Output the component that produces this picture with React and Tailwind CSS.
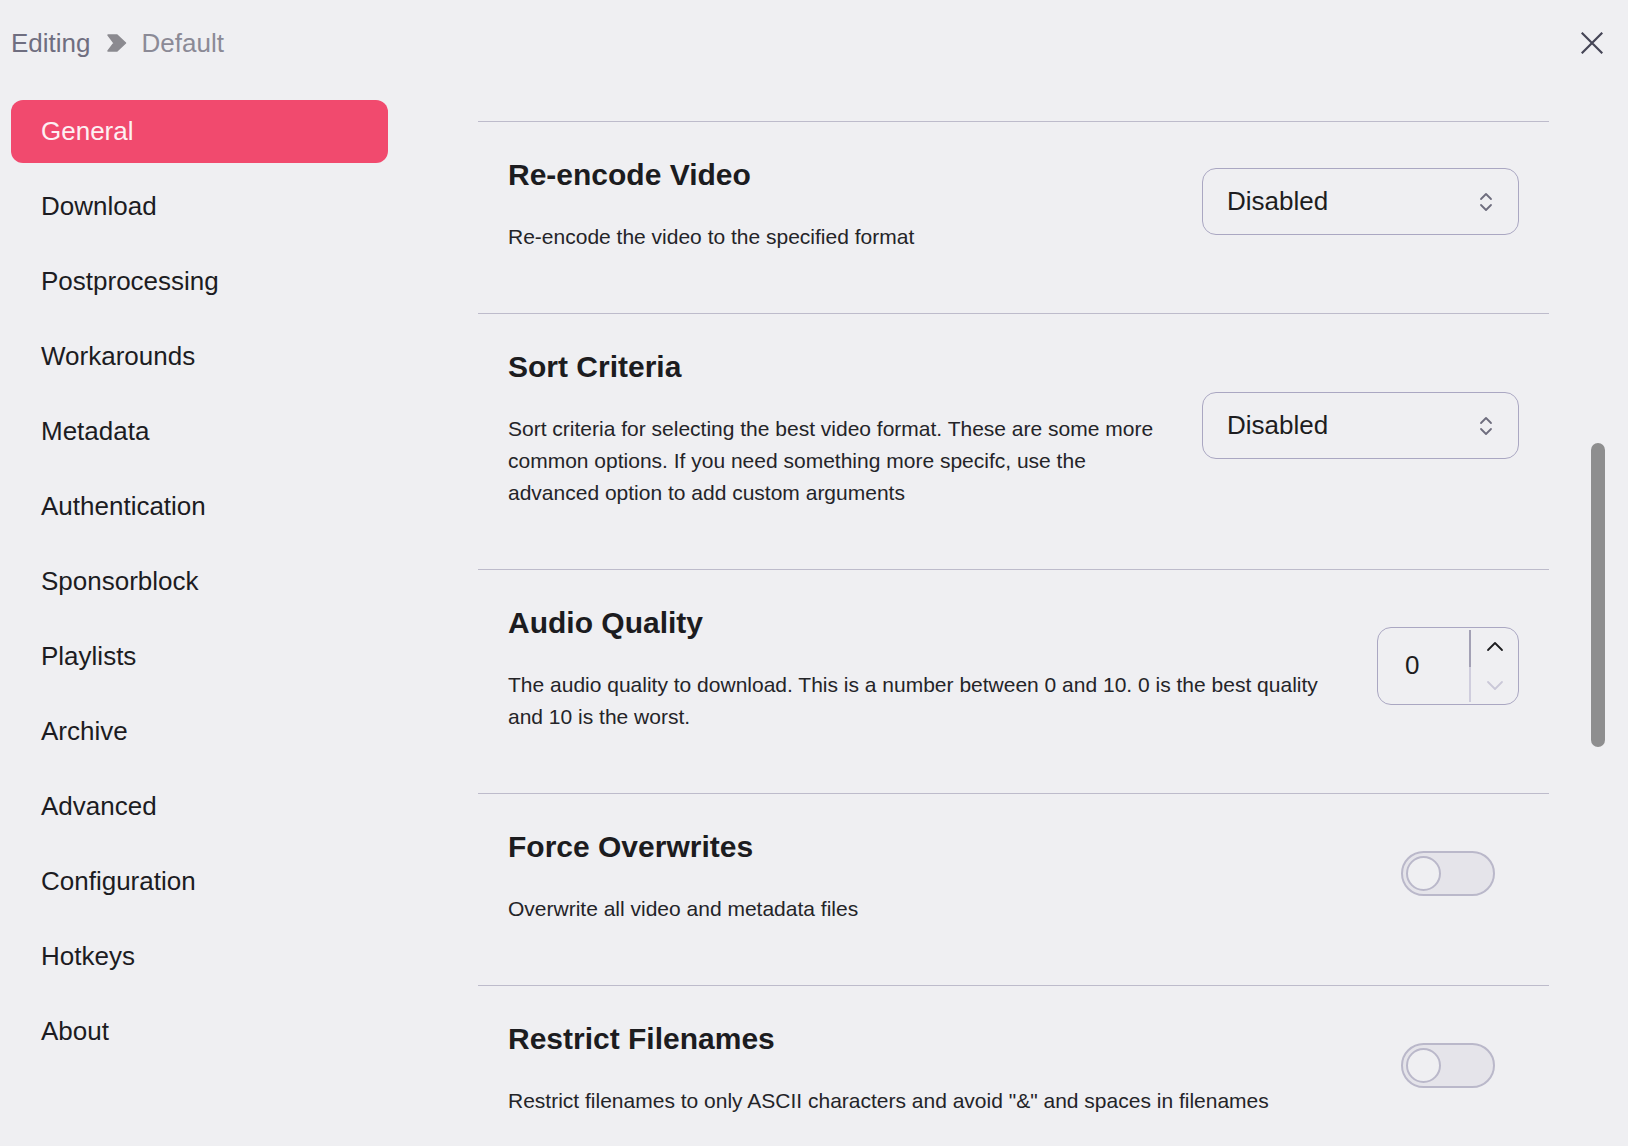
import React from "react";

const navItems = [
  "General",
  "Download",
  "Postprocessing",
  "Workarounds",
  "Metadata",
  "Authentication",
  "Sponsorblock",
  "Playlists",
  "Archive",
  "Advanced",
  "Configuration",
  "Hotkeys",
  "About",
];

function SelectBox() {
  return (
    <div className="w-[317px] h-[67px] shrink-0 mb-[7px] rounded-[14px] border border-[#aaa7c2] flex items-center justify-between pl-[24px] pr-[24px]">
      <span className="text-[26px] text-[#1d1d20]">Disabled</span>
      <svg width="16" height="24" viewBox="0 0 16 24" fill="none" stroke="#6e6d7e" strokeWidth="1.8" strokeLinecap="round" strokeLinejoin="round">
        <path d="M3 9 L8 4 L13 9" />
        <path d="M3 15 L8 20 L13 15" />
      </svg>
    </div>
  );
}

function NumberBox() {
  return (
    <div className="w-[142px] h-[78px] shrink-0 mb-[7px] rounded-[14px] border border-[#aaa7c2] flex">
      <div className="flex-1 flex items-center pl-[27px] text-[26px] text-[#1d1d20]">0</div>
      <div className="w-[49px] flex flex-col py-[2px]">
        <div className="flex-1 border-l-2 border-[#a3a1b5] flex items-center justify-center pb-[5px]">
          <svg width="20" height="12" viewBox="0 0 20 12" fill="none" stroke="#1d1d20" strokeWidth="1.8" strokeLinecap="round" strokeLinejoin="round">
            <path d="M3 10 L10 3 L17 10" />
          </svg>
        </div>
        <div className="flex-1 border-l-2 border-[#cfcddd] flex items-center justify-center pt-[2px]">
          <svg width="20" height="12" viewBox="0 0 20 12" fill="none" stroke="#cac8d8" strokeWidth="1.8" strokeLinecap="round" strokeLinejoin="round">
            <path d="M3 3 L10 10 L17 3" />
          </svg>
        </div>
      </div>
    </div>
  );
}

function Toggle() {
  return (
    <div className="w-[94px] h-[45px] shrink-0 mr-[24px] mb-[7px] rounded-full border-2 border-[#bab8ca] bg-[#e5e4ea] flex items-center pl-[3px]">
      <div className="w-[35px] h-[35px] rounded-full border-2 border-[#bab8ca] bg-[#efeff2]" />
    </div>
  );
}

function Section({ title, desc, control }) {
  return (
    <div className="border-t border-[#bdbbcb] pt-[35px] pb-[60px] px-[30px] flex items-center">
      <div className="flex-1 min-w-0 mr-[46px]">
        <div className="text-[30px] leading-[36px] font-bold text-[#1c1c1f]">{title}</div>
        <div className="mt-[28px] text-[21px] leading-[32px] text-[#242428]">{desc}</div>
      </div>
      {control}
    </div>
  );
}

export default function App() {
  return (
    <div
      className="w-full h-[1146px] bg-[#efeff2] overflow-hidden flex flex-col relative"
      style={{ fontFamily: '"Liberation Sans", Arial, Helvetica, sans-serif' }}
    >
      <header className="h-[86px] shrink-0 flex items-center justify-between pl-[11px] pr-[25px]">
        <div className="flex items-center text-[26px]">
          <span className="text-[#6f6e80]">Editing</span>
          <svg className="ml-[15px] mr-[15px]" width="21" height="18" viewBox="0 0 21 18">
            <path d="M2 1 L11 1 L19.5 9 L11 17 L2 17 L8 9 Z" fill="#8b8a90" stroke="#8b8a90" strokeWidth="1.5" strokeLinejoin="round" />
          </svg>
          <span className="text-[#8b8a96]">Default</span>
        </div>
        <svg width="22" height="22" viewBox="0 0 22 22" fill="none" stroke="#454556" strokeWidth="2.2" strokeLinecap="square">
          <path d="M1.5 1.5 L20.5 20.5 M20.5 1.5 L1.5 20.5" />
        </svg>
      </header>

      <div className="flex flex-1 min-h-0">
        <nav className="w-[377px] ml-[11px] shrink-0 pt-[14px] flex flex-col gap-[12px]">
          {navItems.map((item, i) => (
            <div
              key={item}
              className={
                i === 0
                  ? "h-[63px] rounded-[12px] bg-[#f14a6e] text-[#fdf0f3] flex items-center pl-[30px] text-[26px]"
                  : "h-[63px] rounded-[12px] text-[#1c1c22] flex items-center pl-[30px] text-[26px]"
              }
            >
              {item}
            </div>
          ))}
        </nav>

        <main className="ml-[90px] w-[1071px] shrink-0 pt-[35px] overflow-hidden">
          <Section
            title="Re-encode Video"
            desc="Re-encode the video to the specified format"
            control={<SelectBox />}
          />
          <Section
            title="Sort Criteria"
            desc="Sort criteria for selecting the best video format. These are some more common options. If you need something more specifc, use the advanced option to add custom arguments"
            control={<SelectBox />}
          />
          <Section
            title="Audio Quality"
            desc="The audio quality to download. This is a number between 0 and 10. 0 is the best quality and 10 is the worst."
            control={<NumberBox />}
          />
          <Section
            title="Force Overwrites"
            desc="Overwrite all video and metadata files"
            control={<Toggle />}
          />
          <Section
            title="Restrict Filenames"
            desc={'Restrict filenames to only ASCII characters and avoid "&" and spaces in filenames'}
            control={<Toggle />}
          />
        </main>
      </div>

      <div className="absolute left-[1591px] top-[443px] w-[14px] h-[304px] rounded-full bg-[#8e8e8f]" />
    </div>
  );
}
